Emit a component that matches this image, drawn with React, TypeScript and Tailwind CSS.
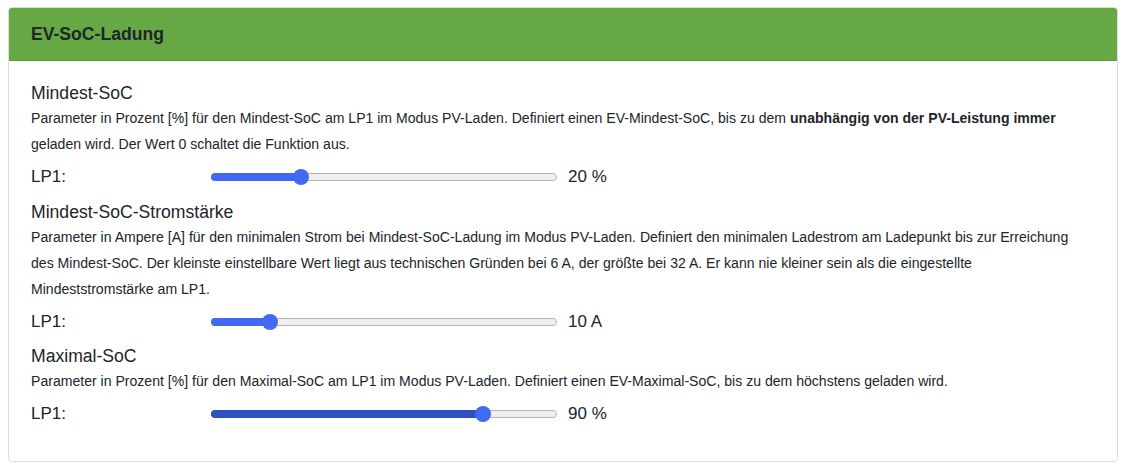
import React from "react";

function Slider({ pct, fill, value }: { pct: number; fill: string; value: string }) {
  return (
    <div className="flex h-[40px] items-center">
      <div className="w-[180px] text-[17px] text-[#212529]">LP1:</div>
      <div className="relative h-[8px] w-[346px] rounded-full border border-[#b5b5b5] bg-[#efefef]">
        <div
          className="absolute left-[-1px] top-[-1px] h-[8px] rounded-full"
          style={{ width: `${pct}%`, backgroundColor: fill }}
        />
        <div
          className="absolute top-1/2 h-[16px] w-[16px] -translate-x-1/2 -translate-y-1/2 rounded-full bg-[#4169f4]"
          style={{ left: `${pct}%` }}
        />
      </div>
      <div className="ml-[11px] text-[17px] text-[#212529]">{value}</div>
    </div>
  );
}

export default function App() {
  return (
    <div className="bg-white w-[1128px] h-[474px] pt-[7px] pl-[8px] font-['Liberation_Sans',Arial,sans-serif]">
      <div className="w-[1110px] h-[455px] rounded-[4px] border border-[#dcdcdc] overflow-hidden">
        <div className="h-[53px] bg-[#66a844] border-b border-[#5c9a3d] flex items-center pl-[22px]">
          <span className="text-[17.6px] font-bold text-[#212529]">EV-SoC-Ladung</span>
        </div>
        <div className="pl-[22px] pt-[20px] text-[#212529]">
          <div className="text-[17.6px] leading-[24px]">Mindest-SoC</div>
          <div className="text-[14.07px] leading-[26px] text-[#212529]">
            Parameter in Prozent [%] für den Mindest-SoC am LP1 im Modus PV-Laden. Definiert einen EV-Mindest-SoC, bis zu dem{" "}
            <b>unabhängig von der PV-Leistung immer</b>
            <br />
            geladen wird. Der Wert 0 schaltet die Funktion aus.
          </div>
          <Slider pct={26} fill="#4169f4" value="20 %" />

          <div className="mt-[3px] text-[17.6px] leading-[24px]">Mindest-SoC-Stromstärke</div>
          <div className="text-[14.07px] leading-[26px] text-[#212529]">
            Parameter in Ampere [A] für den minimalen Strom bei Mindest-SoC-Ladung im Modus PV-Laden. Definiert den minimalen Ladestrom am Ladepunkt bis zur Erreichung
            <br />
            des Mindest-SoC. Der kleinste einstellbare Wert liegt aus technischen Gründen bei 6 A, der größte bei 32 A. Er kann nie kleiner sein als die eingestellte
            <br />
            Mindeststromstärke am LP1.
          </div>
          <Slider pct={16.8} fill="#4169f4" value="10 A" />

          <div className="mt-[2px] text-[17.6px] leading-[24px]">Maximal-SoC</div>
          <div className="text-[14.07px] leading-[26px] text-[#212529]">
            Parameter in Prozent [%] für den Maximal-SoC am LP1 im Modus PV-Laden. Definiert einen EV-Maximal-SoC, bis zu dem höchstens geladen wird.
          </div>
          <Slider pct={78.9} fill="#2f4fc4" value="90 %" />
        </div>
      </div>
    </div>
  );
}
